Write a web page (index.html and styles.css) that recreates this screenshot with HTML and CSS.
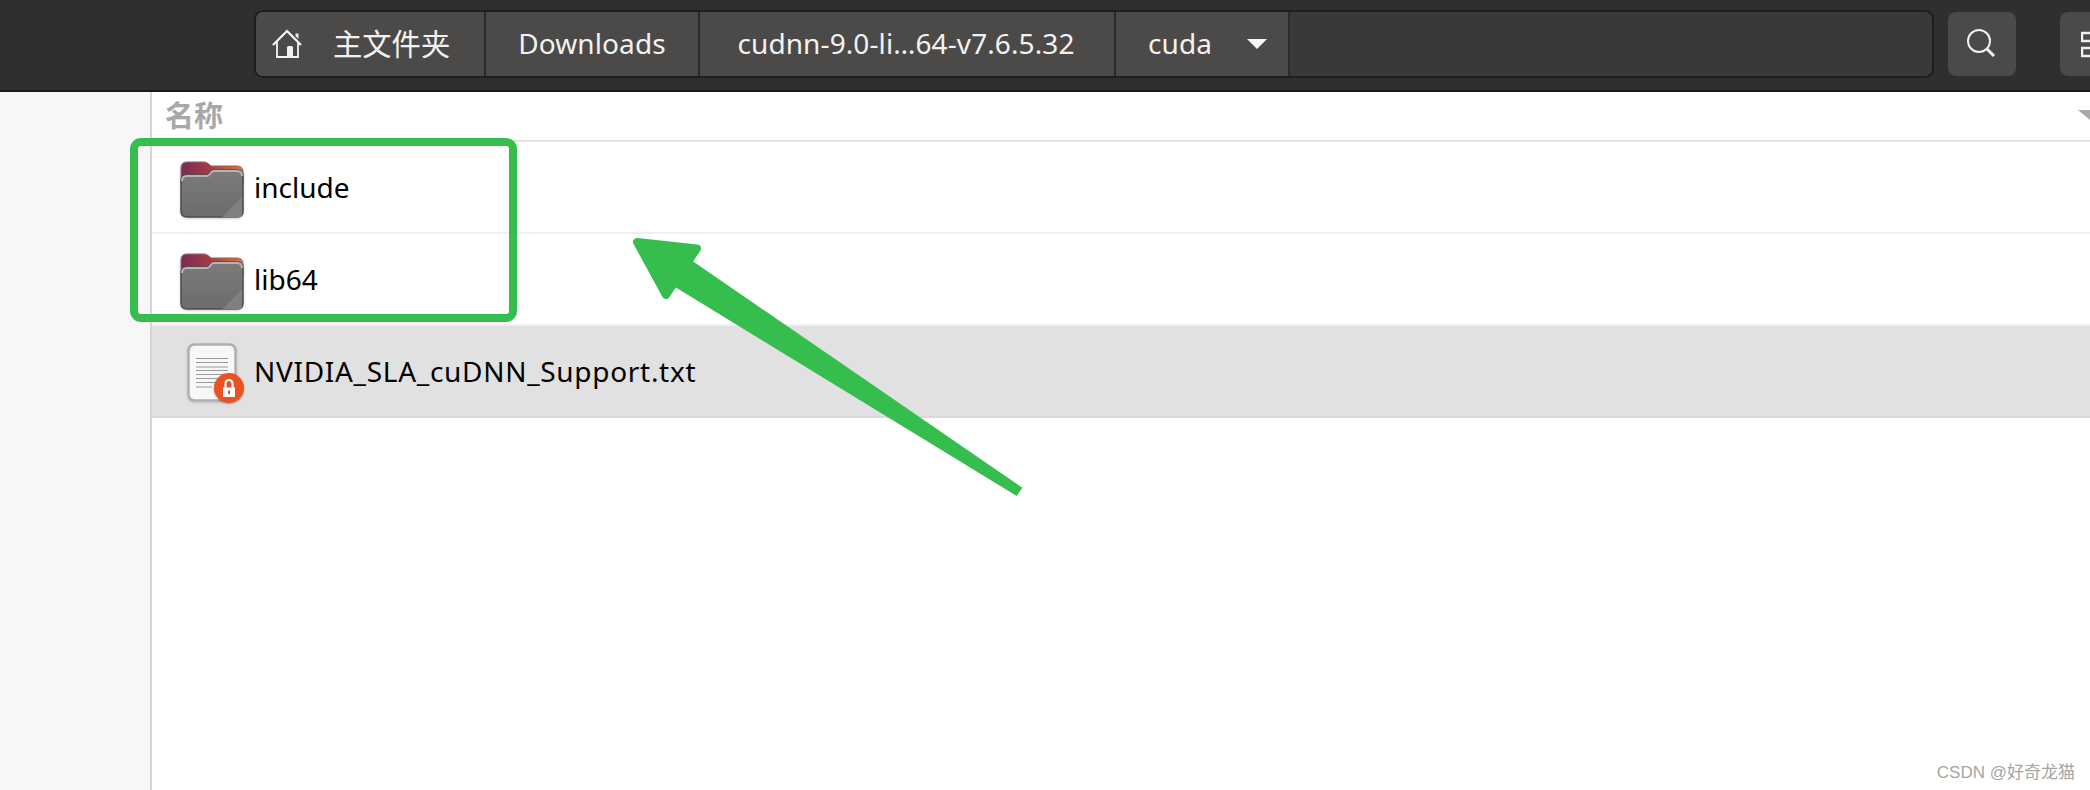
FILE: index.html
```html
<!DOCTYPE html>
<html lang="zh">
<head>
<meta charset="utf-8">
<title>cuda</title>
<link rel="stylesheet" href="styles.css">
</head>
<body>
<div class="app">
  <header class="toolbar">
    <nav class="pathbar">
      <div class="crumb crumb-home">
        <svg class="home-icon" viewBox="0 0 30 30" width="30" height="30">
          <path d="M1 16 15 2l14 14" fill="none" stroke="#f6f6f6" stroke-width="2.200"/>
          <path d="M5 13v15h21V13" fill="none" stroke="#f6f6f6" stroke-width="1.800"/>
          <path d="M4 27h11v2H4z" fill="#f6f6f6"/>
          <path d="M15 18.500q0-1.500 1.500-1.500h3q1.500 0 1.500 1.500V29h-6z" fill="#f0f0f0"/>
          <path d="M23.500 4.500h3v5.500l-3-3z" fill="#e8e8e8"/>
        </svg>
        <span class="crumb-label crumb-label-cjk">主文件夹</span>
      </div>
      <div class="crumb crumb-downloads"><span class="crumb-label">Downloads</span></div>
      <div class="crumb crumb-cudnn"><span class="crumb-label">cudnn-9.0-li…64-v7.6.5.32</span></div>
      <div class="crumb crumb-cuda">
        <span class="crumb-label">cuda</span>
        <span class="caret"></span>
      </div>
    </nav>
    <button class="tool-btn search-btn" type="button" aria-label="搜索">
      <svg viewBox="0 0 30 30" width="30" height="30">
        <circle cx="12" cy="12" r="11" fill="none" stroke="#f0f0f0" stroke-width="2"/>
        <path d="m20 20 7 7" stroke="#f0f0f0" stroke-width="3" fill="none"/>
      </svg>
    </button>
    <button class="tool-btn view-btn" type="button" aria-label="视图">
      <svg viewBox="0 0 30 30" width="30" height="30">
        <path d="M1 4h14v8H1zM1 19h14v8H1z" fill="none" stroke="#f0f0f0" stroke-width="2.500"/>
      </svg>
    </button>
  </header>
  <div class="content">
    <aside class="sidebar"></aside>
    <main class="list">
      <div class="list-head">
        <span class="head-name">名称</span>
        <span class="sort-arrow"></span>
      </div>
      <div class="row">
        <svg class="folder" viewBox="0 0 64 58" width="64" height="58">
          <use href="#folder-icon"/>
        </svg>
        <span class="name">include</span>
      </div>
      <div class="row">
        <svg class="folder" viewBox="0 0 64 58" width="64" height="58">
          <use href="#folder-icon"/>
        </svg>
        <span class="name">lib64</span>
      </div>
      <div class="row row-selected">
        <span class="doc">
          <svg viewBox="0 0 50 60" width="50" height="60">
            <rect x="1.500" y="1.500" width="47" height="56" rx="6" fill="#f7f7f7" stroke="#b0b0b0" stroke-width="2.500"/>
            <path d="M9 15.500h32M9 19.500h32M9 24h32M9 27.500h32M9 31.500h32M9 35.500h32M9 39.500h24M9 44h16" stroke="#9a9a9a" stroke-width="1"/>
          </svg>
          <span class="lock-badge">
            <svg viewBox="0 0 30 30" width="30" height="30">
              <path d="M11.500 15v-4.500a3.500 3.500 0 0 1 7 0V15" fill="none" stroke="#fff" stroke-width="2.200"/>
              <path d="M9 14.500h12V24H9z" fill="#fff"/>
              <rect x="14" y="17.500" width="2" height="3.500" fill="#ec5122"/>
            </svg>
          </span>
        </span>
        <span class="name name-long">NVIDIA_SLA_cuDNN_Support.txt</span>
      </div>
    </main>
  </div>
  <svg class="annotation" viewBox="0 0 2090 790" width="2090" height="790">
    <rect class="anno-box" x="134" y="142" width="379" height="176" rx="7"/>
    <path class="anno-head" d="M637 242 697 248.500 666 295z"/>
    <path class="anno-shaft" d="M680 252.400 1022.300 487.700 1016.700 496 660 277.800z"/>
  </svg>
  <div class="watermark">CSDN @好奇龙猫</div>
</div>
<svg class="defs" width="0" height="0" aria-hidden="true">
  <defs>
    <linearGradient id="tab-grad" x1="0" x2="1" y1="0" y2="0">
      <stop offset="0" stop-color="#7a2a58"/>
      <stop offset="0.450" stop-color="#a23c45"/>
      <stop offset="1" stop-color="#e5702e"/>
    </linearGradient>
    <linearGradient id="front-grad" x1="0" x2="0" y1="0" y2="1">
      <stop offset="0" stop-color="#7b7b7b"/>
      <stop offset="1" stop-color="#6c6c6c"/>
    </linearGradient>
    <symbol id="folder-icon" viewBox="0 0 64 58">
      <path d="M1 7q0-6 6-6h17q2.500 0 4 1.500l3 2.500h26q6 0 6 6v12H1z" fill="url(#tab-grad)" stroke="#8a6a6a" stroke-width="1"/>
      <path d="M1 50V20q0-6 6-6h20q1.500 0 3-2.500t3.500-2.500H57q6 0 6 6v35q0 6-6 6H7q-6 0-6-6z" fill="url(#front-grad)" stroke="#4e4e4e" stroke-width="1.500"/>
      <path d="M2 20q0-5 5-5h20q2 0 3.500-2.500t3-2.500H57q5 0 5 5" fill="none" stroke="#b4b4b4" stroke-width="2"/>
      <path d="M62 36v16q0 4.500-4.500 4.500H42z" fill="#808080"/>
    </symbol>
  </defs>
</svg>
</body>
</html>
```
FILE: styles.css
```css
* { box-sizing: border-box; }
html, body { margin: 0; padding: 0; }
body {
  width: 2090px;
  height: 790px;
  overflow: hidden;
  background: #fff;
  font-family: "Noto Sans", "Noto Sans CJK SC", sans-serif;
}
.app { position: relative; width: 2090px; height: 790px; overflow: hidden; }
.defs { position: absolute; }

.toolbar {
  display: flex;
  align-items: center;
  height: 92px;
  padding: 0 0 2px 254px;
  background: #302e2e;
  border-bottom: 2px solid #1c1b1b;
}
.pathbar {
  display: flex;
  flex: none;
  width: 1680px;
  height: 68px;
  background: #3a3937;
  border: 2px solid #1f1e1e;
  border-radius: 9px;
  overflow: hidden;
}
.crumb {
  display: flex;
  flex: none;
  align-items: center;
  height: 100%;
  background: #4b4a48;
  border-right: 2px solid #2c2b2a;
  color: #f2f2f2;
  font-size: 28px;
  letter-spacing: 0.1px;
}
.crumb-label { padding-bottom: 2px; }
.crumb-home { width: 230px; padding-left: 16px; gap: 31px; }
.crumb-label-cjk { font-size: 29.3px; letter-spacing: 0; padding-bottom: 4px; }
.crumb-downloads { width: 214px; justify-content: center; }
.crumb-cudnn { width: 416px; justify-content: center; padding-right: 2px; }
.crumb-cuda { width: 174px; padding-left: 32px; }
.home-icon { flex: none; }
.caret {
  margin-left: 35px;
  width: 0;
  height: 0;
  border-left: 10px solid transparent;
  border-right: 10px solid transparent;
  border-top: 10px solid #f6f6f6;
}
.tool-btn {
  display: flex;
  flex: none;
  align-items: center;
  justify-content: center;
  height: 64px;
  padding: 0;
  background: #4b4a48;
  border: 0;
  border-radius: 8px;
}
.search-btn { width: 68px; margin-left: 14px; }
.view-btn { width: 60px; margin-left: 44px; padding-left: 21px; justify-content: flex-start; }
.tool-btn svg { flex: none; }

.content { display: flex; height: 698px; }
.sidebar {
  flex: none;
  width: 152px;
  background: #f7f7f7;
  border-right: 2px solid #d6d6d6;
}
.list { flex: 1; min-width: 0; }
.list-head {
  display: flex;
  align-items: center;
  justify-content: space-between;
  height: 50px;
  padding: 0 0 2px 13px;
  border-bottom: 2px solid #e3e3e3;
}
.head-name { color: #a8a8a8; font-size: 29px; font-weight: 700; padding-bottom: 2px; font-family: "Noto Sans CJK SC", sans-serif; }
.sort-arrow {
  width: 0;
  height: 0;
  border-left: 12px solid transparent;
  border-top: 10px solid #a8a8a8;
}
.row {
  display: flex;
  align-items: center;
  height: 92px;
  padding-left: 28px;
  border-bottom: 2px solid #f0f0f0;
  color: #000;
  font-size: 28px;
}
.row-selected { background: #e1e1e1; border-bottom-color: #d8d8d8; }
.name { padding-bottom: 1px; }
.folder {
  flex: none;
  width: 64px;
  height: 58px;
  margin: 6px 10px 0 0;
  filter: drop-shadow(0 1px 1px rgba(0,0,0,.2));
}
.doc { position: relative; flex: none; display: block; width: 57px; height: 60px; margin: 3px 10px 0 7px; }
.doc svg { display: block; filter: drop-shadow(0 1px 1px rgba(0,0,0,.15)); }
.name-long { letter-spacing: 0.7px; }
.lock-badge {
  position: absolute;
  right: 0;
  bottom: 0;
  display: block;
  width: 30px;
  height: 30px;
  background: #ec5122;
  border-radius: 50%;
  box-shadow: 0 1px 2px rgba(0,0,0,.3);
}
.lock-badge svg { filter: none; }

.annotation { position: absolute; left: 0; top: 0; pointer-events: none; }
.anno-box { fill: none; stroke: #35bd4e; stroke-width: 8; }
.anno-head { fill: #35bd4e; stroke: #35bd4e; stroke-width: 8; stroke-linejoin: round; }
.anno-shaft { fill: #35bd4e; }
.watermark {
  position: absolute;
  right: 15px;
  bottom: 7px;
  color: #a5a5a5;
  font-size: 17px;
  font-family: "Liberation Sans", "Noto Sans CJK SC", sans-serif;
}
```
